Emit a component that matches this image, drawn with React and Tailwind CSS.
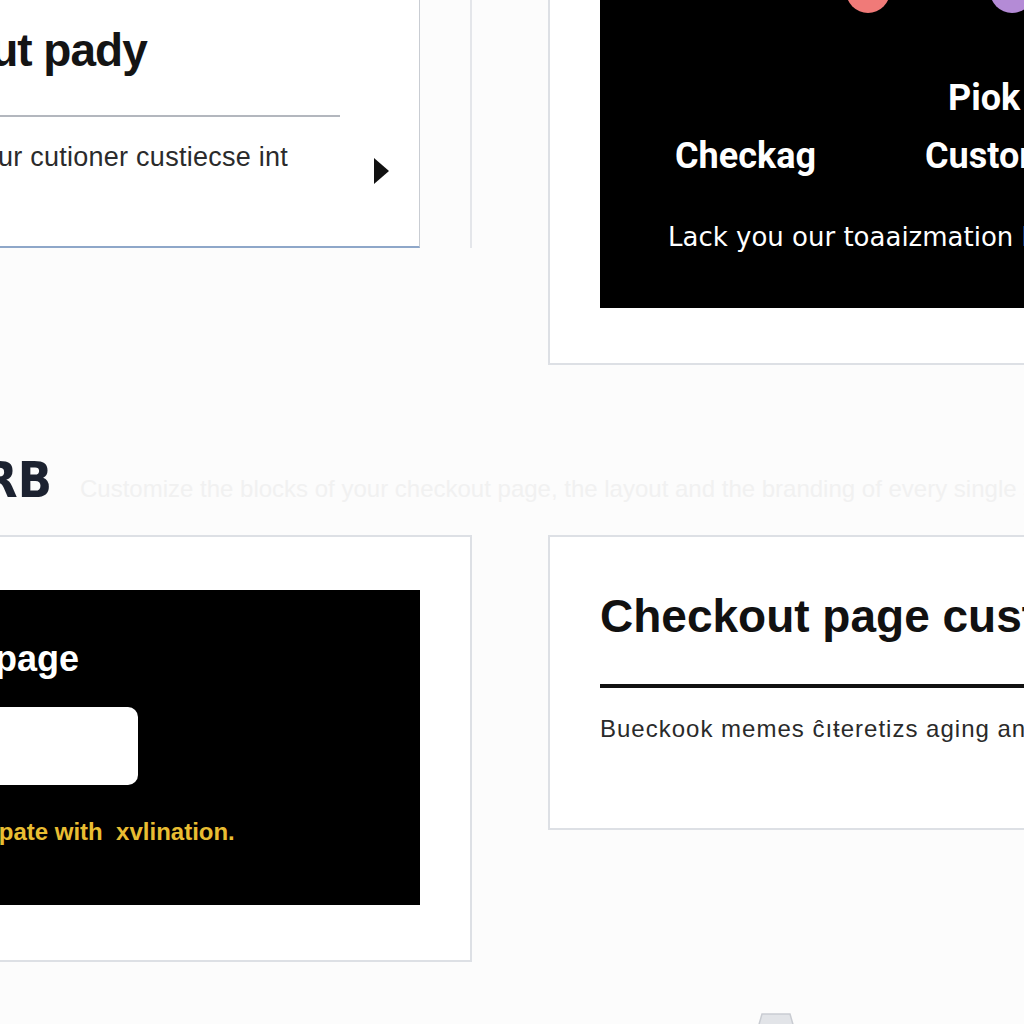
import React from 'react'

const sans = { fontFamily: '"Liberation Sans", Arial, sans-serif' }

function Triangle() {
  return (
    <svg width="15" height="26" viewBox="0 0 15 26" className="shrink-0">
      <polygon points="0,0 15,13 0,26" fill="#111" />
    </svg>
  )
}

export default function App() {
  return (
    <div className="w-[1024px] h-[1024px] overflow-hidden bg-[#fcfcfc] font-['Liberation_Sans',Arial,sans-serif]">
      <div className="ml-[-300px] mt-[-100px] flex flex-col">
        {/* top row */}
        <div className="grid grid-cols-[772px_560px] gap-x-[76px] items-start">
          <div className="h-[348px] flex border-r-2 border-[#e4e6ea] pr-[50px]">
            <div className="flex-1 bg-white border-r-[1.5px] border-r-[#c9cdd3] border-b-2 border-b-[#8ea7c9] pt-[127px]">
              <h2 className="ml-[130px] text-[46px] font-bold leading-none tracking-[-1px] text-[#141414] whitespace-nowrap">
                Checkout pady
              </h2>
              <div className="mt-[42px] h-[2px] w-[640px] bg-[#b3b7be]" />
              <div className="mt-[27px] flex items-start pr-[30px]">
                <p className="ml-[267px] text-[27px] leading-none tracking-[0.25px] text-[#2b2b2b] whitespace-nowrap">
                  Your cutioner custiecse int
                </p>
                <div className="ml-auto mt-[14px]">
                  <Triangle />
                </div>
              </div>
            </div>
          </div>

          <div className="bg-white border-2 border-[#dde0e5] pt-[52px] pl-[50px] pb-[55px]">
            <div className="h-[354px] bg-black pt-[15px] pl-[75px] text-white font-['Roboto',Arial,sans-serif] whitespace-nowrap">
              <div className="ml-[171px] flex gap-[100px]">
                <span className="w-[44px] h-[44px] rounded-full bg-[#f07a78]" />
                <span className="w-[44px] h-[44px] rounded-full bg-[#b48bd6]" />
              </div>
              <div className="mt-[67px] ml-[273px] text-[36px] font-bold leading-none">Piok</div>
              <div className="mt-[22px] flex gap-[109px] text-[36px] font-bold leading-none">
                <span>Checkag</span>
                <span>Customize</span>
              </div>
              <div className="mt-[50px] ml-[-7px] text-[26px] leading-none font-['DejaVu_Sans',sans-serif]">
                Lack you our toaaizmation links
              </div>
            </div>
          </div>
        </div>

        {/* section heading */}
        <div className="pt-[90px] pb-[30px] flex items-end">
          <div className="w-[352px] flex justify-end">
            <h3 className="shrink-0 whitespace-nowrap text-[50px] font-bold leading-none text-[#1c2230] font-['DejaVu_Sans_Condensed','DejaVu_Sans',sans-serif]">
              CHECKOUT KERB
            </h3>
          </div>
          <p className="ml-[28px] mb-[4px] text-[24px] leading-none text-[#f1f1f1] whitespace-nowrap">
            Customize the blocks of your checkout page, the layout and the branding of every single step
          </p>
        </div>

        {/* bottom row */}
        <div className="grid grid-cols-[772px_560px] gap-x-[76px] items-start">
          <div className="bg-white border-2 border-[#dde0e5] pt-[53px] pb-[55px] pr-[50px]">
            <div className="h-[315px] bg-black pt-[51px] whitespace-nowrap" style={sans}>
              <div className="ml-[119px] text-[36px] font-bold leading-none text-white">Checkout page</div>
              <div className="mt-[30px] ml-[119px] w-[317px] h-[78px] rounded-[10px] bg-white" />
              <div className="mt-[35px] ml-[142px] text-[24px] font-bold leading-none text-[#e9bd32]">
                Please participate with&nbsp; xvlination.
              </div>
            </div>
          </div>

          <div className="h-[295px] bg-white border-2 border-[#dde0e5] pt-[56px] pl-[50px] whitespace-nowrap">
            <h2 className="text-[46px] font-bold leading-none text-[#111]">Checkout page customization</h2>
            <div className="mt-[45px] h-[4px] bg-[#111]" />
            <p className="mt-[29px] text-[24px] leading-none tracking-[1px] text-[#2a2a2a]">
              Bueckook memes ĉıŧeretizs aging and more
            </p>
          </div>
        </div>

        <div className="mt-[50px] ml-[1052px]">
          <svg width="48" height="30" viewBox="0 0 48 30">
            <polygon points="2,30 10,2 38,2 46,30" fill="#e2e4e8" stroke="#c9ccd2" strokeWidth="1.5" />
          </svg>
        </div>
      </div>
    </div>
  )
}
